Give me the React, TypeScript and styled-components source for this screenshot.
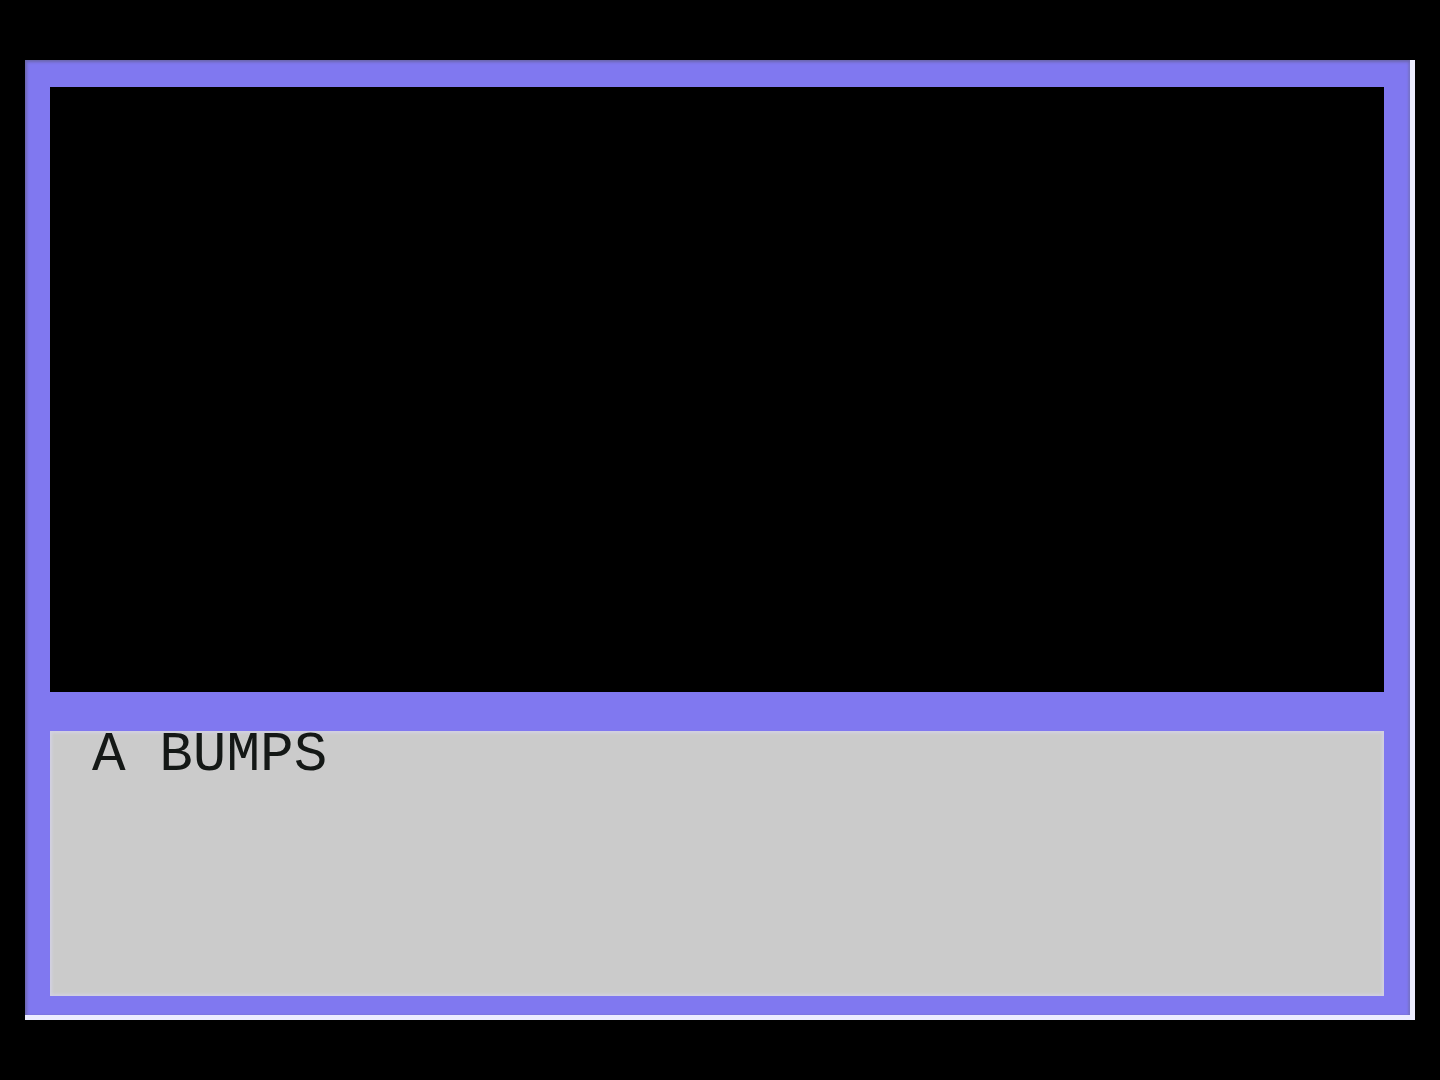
import React from "react";
import styled, { createGlobalStyle } from "styled-components";

const GlobalStyle = createGlobalStyle`
  * { box-sizing: border-box; }
  body { margin: 0; background: #000; }
`;

const Screen = styled.main`
  display: flex;
  min-height: 100vh;
  padding: 60px 25px;
  background: #000;
`;

const Frame = styled.div`
  flex: 1;
  display: grid;
  grid-template-rows: 604fr 265fr;
  gap: 39px;
  padding: 27px 26px 19px 25px;
  background: #8078f0;
  border-right: 5px solid #ececff;
  border-bottom: 5px solid #ececff;
  box-shadow: inset 2px 2px 3px #6b67ad, inset -2px 0 2px #7773cb;
`;

const Viewport = styled.section`
  background: #000;
`;

const MessagePanel = styled.section`
  padding: 0 42px;
  background: #cbcbcb;
  box-shadow: inset 0 0 3px 2px #d2d1e2;
`;

const Message = styled.p`
  margin: 0;
  color: #141816;
  font: 400 56px/48px "Liberation Mono", monospace;
`;

export default function App() {
  return (
    <>
      <GlobalStyle />
      <Screen>
        <Frame>
          <Viewport aria-label="Game view" />
          <MessagePanel aria-live="polite">
            <Message>A BUMPS</Message>
          </MessagePanel>
        </Frame>
      </Screen>
    </>
  );
}
